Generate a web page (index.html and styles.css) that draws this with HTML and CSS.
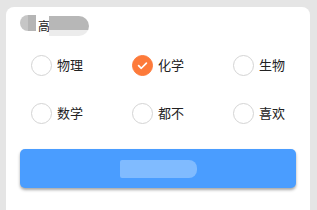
FILE: index.html
```html
<!DOCTYPE html>
<html lang="zh">
<head>
<meta charset="utf-8">
<link rel="stylesheet" href="styles.css">
</head>
<body>
<div class="card">
  <div class="title">
    <span class="blur blur-a"></span>
    <span class="title-text">高</span>
    <span class="blur blur-b"></span>
  </div>
  <div class="options">
    <label class="opt"><span class="radio"></span><span class="label">物理</span></label>
    <label class="opt"><span class="radio checked"><svg viewBox="0 0 22 22" width="22" height="22"><path d="M6.5 11.2 L9.6 14.2 L15.5 8.3" fill="none" stroke="#fff" stroke-width="2" stroke-linecap="round" stroke-linejoin="round"/></svg></span><span class="label">化学</span></label>
    <label class="opt"><span class="radio"></span><span class="label">生物</span></label>
    <label class="opt"><span class="radio"></span><span class="label">数学</span></label>
    <label class="opt"><span class="radio"></span><span class="label">都不</span></label>
    <label class="opt"><span class="radio"></span><span class="label">喜欢</span></label>
  </div>
  <div class="btn"><span class="btn-blur"></span></div>
</div>
</body>
</html>
```
FILE: styles.css
```css
html, body {
  margin: 0;
  padding: 0;
}
body {
  background: #e5e5e5;
  padding: 7px 7px 0 6px;
  height: 210px;
  box-sizing: border-box;
  overflow: hidden;
  font-family: "Noto Sans CJK SC", "Noto Sans", sans-serif;
  color: #222;
}
.card {
  background: #fff;
  border-radius: 8px 8px 0 0;
  height: 203px;
  box-sizing: border-box;
  padding: 7px 14px 0 14px;
}
.title {
  height: 23px;
  display: flex;
  align-items: center;
  font-size: 13px;
}
.blur {
  display: block;
  height: 20px;
  background: linear-gradient(#b7b7b7 0 72%, #ececec 72% 100%);
}
.blur-a {
  width: 16px;
  border-radius: 10px 0 0 10px;
  margin-right: 2px;
  background: linear-gradient(to right, #c6c6c6 0 50%, #b5b5b5 50% 100%);
  height: 16px;
  align-self: flex-start;
  margin-top: 1px;
}
.title-text {
  line-height: 13px;
  font-size: 12px;
  width: 11px;
}
.blur-b {
  width: 40px;
  border-radius: 0 10px 10px 0;
}
.options {
  display: grid;
  grid-template-columns: 101px 101px minmax(0, 1fr);
  grid-auto-rows: 48px;
  padding: 4px 0 0 11px;
}
.opt {
  display: flex;
  align-items: center;
  gap: 5px;
  min-width: 0;
}
.radio {
  width: 21px;
  height: 21px;
  box-sizing: border-box;
  border: 1px solid #d4d4d4;
  border-radius: 50%;
  display: flex;
  align-items: center;
  justify-content: center;
  flex: none;
}
.radio.checked {
  background: #fd7a3a;
  border-color: #fd7a3a;
}
.radio svg {
  display: block;
  width: 21px;
  height: 21px;
}
.label {
  font-size: 13px;
  line-height: 16px;
  color: #222;
}
.btn {
  margin-top: 12px;
  height: 39px;
  background: #4a9dff;
  border-radius: 5px;
  box-shadow: 0 2px 3px rgba(0, 0, 0, 0.35);
  display: flex;
  align-items: center;
  justify-content: center;
}
.btn-blur {
  display: block;
  width: 77px;
  height: 18px;
  background: #80bbff;
  border-radius: 2px 8px 8px 2px;
}
```
